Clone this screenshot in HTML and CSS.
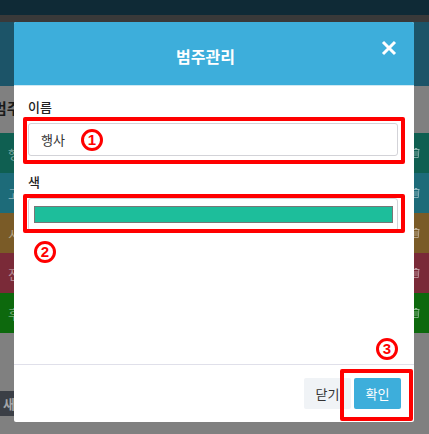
FILE: index.html
```html
<!DOCTYPE html>
<html lang="ko">
<head>
<meta charset="utf-8">
<title>범주관리</title>
<link rel="stylesheet" href="styles.css">
</head>
<body>
<div class="page">
  <div class="topbar"></div>
  <div class="strip"></div>
  <div class="hero"></div>
  <div class="section-title">범주</div>
  <ul class="cat-list">
    <li class="cat cat-green"><span class="cat-name">행사</span><svg class="trash" viewBox="0 0 8 10" width="8" height="10"><path d="M0.5 1.5h7M3 1.5v-1h2v1M1.2 1.5l0.5 8h4.6l0.5-8M3 3v5M5 3v5" fill="none" stroke="currentColor" stroke-width="1"/></svg></li>
    <li class="cat cat-teal"><span class="cat-name">고객</span><svg class="trash" viewBox="0 0 8 10" width="8" height="10"><path d="M0.5 1.5h7M3 1.5v-1h2v1M1.2 1.5l0.5 8h4.6l0.5-8M3 3v5M5 3v5" fill="none" stroke="currentColor" stroke-width="1"/></svg></li>
    <li class="cat cat-brown"><span class="cat-name">시장</span><svg class="trash" viewBox="0 0 8 10" width="8" height="10"><path d="M0.5 1.5h7M3 1.5v-1h2v1M1.2 1.5l0.5 8h4.6l0.5-8M3 3v5M5 3v5" fill="none" stroke="currentColor" stroke-width="1"/></svg></li>
    <li class="cat cat-red"><span class="cat-name">전화</span><svg class="trash" viewBox="0 0 8 10" width="8" height="10"><path d="M0.5 1.5h7M3 1.5v-1h2v1M1.2 1.5l0.5 8h4.6l0.5-8M3 3v5M5 3v5" fill="none" stroke="currentColor" stroke-width="1"/></svg></li>
    <li class="cat cat-lime"><span class="cat-name">후속</span><svg class="trash" viewBox="0 0 8 10" width="8" height="10"><path d="M0.5 1.5h7M3 1.5v-1h2v1M1.2 1.5l0.5 8h4.6l0.5-8M3 3v5M5 3v5" fill="none" stroke="currentColor" stroke-width="1"/></svg></li>
  </ul>
  <div class="list-foot">
    <button class="new-btn">새 범주</button>
  </div>
</div>

<div class="modal">
  <div class="modal-header">
    <h2 class="modal-title">범주관리</h2>
    <button class="close-btn" aria-label="닫기">
      <svg viewBox="0 0 16 16" width="16" height="16"><path d="M2 2L14 14M14 2L2 14" stroke="#fff" stroke-width="3" fill="none"/></svg>
    </button>
  </div>
  <div class="modal-body">
    <label class="field-label">이름</label>
    <div class="text-input">행사</div>
    <label class="field-label field-label-2">색</label>
    <div class="color-input"><div class="swatch"></div></div>
  </div>
  <div class="modal-footer">
    <button class="btn btn-close">닫기</button>
    <button class="btn btn-ok">확인</button>
  </div>

  <div class="mark mark-1"></div>
  <div class="mark mark-2"></div>
  <div class="mark mark-3"></div>
  <span class="num num-1">1</span>
  <span class="num num-2">2</span>
  <span class="num num-3">3</span>
</div>
</body>
</html>
```

FILE: styles.css
```css
html, body {
  margin: 0;
  padding: 0;
}
body {
  width: 429px;
  height: 434px;
  overflow: hidden;
  background: #808080;
  font-family: "Noto Sans CJK KR", "Noto Sans", sans-serif;
  position: relative;
}
.page {
  display: flex;
  flex-direction: column;
}
.topbar {
  height: 15px;
  background: #0f2a36;
}
.strip {
  height: 7px;
  background: #393939;
}
.hero {
  height: 64px;
  background: #1c5468;
}
.section-title {
  height: 47px;
  background: #808080;
  box-sizing: border-box;
  padding-top: 12px;
  margin-left: -7px;
  font-size: 15px;
  font-weight: 700;
  color: #1a1a1a;
  line-height: 20px;
}
.cat-list {
  list-style: none;
  margin: 0;
  padding: 0;
}
.cat {
  height: 40px;
  display: flex;
  align-items: center;
  justify-content: space-between;
  padding: 0 8px 0 8px;
  font-size: 13px;
  color: rgba(255, 255, 255, 0.45);
}
.trash {
  color: rgba(255, 255, 255, 0.45);
  margin-right: 1px;
}
.cat-green { background: #0f5f51; }
.cat-teal { background: #1d6b79; }
.cat-brown { background: #7a5b27; }
.cat-red { background: #7a2a38; }
.cat-lime { background: #0d690d; }
.list-foot {
  padding-top: 58px;
}
.new-btn {
  display: block;
  height: 25px;
  border: 0;
  margin: 0;
  padding: 0 8px 0 3px;
  background: #3b3f46;
  color: rgba(255, 255, 255, 0.55);
  font-family: inherit;
  font-size: 13px;
  font-weight: 700;
}

.modal {
  position: absolute;
  left: 14px;
  top: 22px;
  width: 400px;
  height: 400px;
  background: #fff;
  border-radius: 2px;
  display: flex;
  flex-direction: column;
}
.modal-header {
  height: 64px;
  box-sizing: border-box;
  background: #3daedb;
  border-bottom: 1px solid #cfe9f3;
  border-radius: 2px 2px 0 0;
  display: flex;
  align-items: flex-start;
  padding: 18px 17px 0 16px;
}
.modal-title {
  flex: 1;
  margin: 0;
  padding-top: 5px;
  text-align: center;
  color: #fff;
  font-size: 16px;
  font-weight: 700;
  line-height: 22px;
}
.close-btn {
  border: 0;
  background: none;
  padding: 0;
  margin: 0;
  width: 16px;
  height: 16px;
  display: block;
}
.close-btn svg { display: block; }
.modal-body {
  flex: 1;
  padding: 11px 16px 0 14px;
  display: flex;
  flex-direction: column;
}
.field-label {
  font-size: 13px;
  font-weight: 500;
  color: #222;
  line-height: 20px;
  margin-bottom: 6px;
}
.field-label-2 {
  margin-top: 16px;
}
.text-input {
  height: 33px;
  box-sizing: border-box;
  border: 1px solid #d3d3d8;
  border-radius: 3px;
  padding: 0 12px;
  font-size: 13px;
  line-height: 31px;
  color: #333;
}
.color-input {
  height: 33px;
  box-sizing: border-box;
  border: 1px solid #d3d3d8;
  border-radius: 3px;
  padding: 7px 4px 0 5px;
}
.swatch {
  height: 17px;
  box-sizing: border-box;
  border: 1px solid #777;
  background: #1dbe9b;
}
.modal-footer {
  height: 58px;
  box-sizing: border-box;
  border-top: 1px solid #e0e0ea;
  display: flex;
  justify-content: flex-end;
  align-items: flex-start;
  gap: 3px;
  padding: 13px 13px 0 0;
}
.btn {
  height: 31px;
  width: 47px;
  border: 0;
  border-radius: 2px;
  font-family: inherit;
  font-size: 13px;
  padding: 0;
}
.btn-close {
  background: #f0f3f6;
  color: #333;
}
.btn-ok {
  background: #3daedb;
  color: #fff;
}

.mark {
  position: absolute;
  border: 4px solid #ff0000;
  border-radius: 2px;
  box-sizing: border-box;
}
.mark-1 { left: 9px; top: 95px; width: 382px; height: 47px; }
.mark-2 { left: 9px; top: 172px; width: 382px; height: 39px; }
.mark-3 { left: 326px; top: 347px; width: 73px; height: 52px; }
.num {
  position: absolute;
  width: 22px;
  height: 22px;
  box-sizing: border-box;
  border: 3px solid #ff0000;
  border-radius: 50%;
  color: #ff0000;
  font-family: "Liberation Sans", sans-serif;
  font-weight: 700;
  font-size: 15px;
  line-height: 16px;
  text-align: center;
}
.num-1 { left: 67px; top: 107px; }
.num-2 { left: 20px; top: 219px; }
.num-3 { left: 362px; top: 316px; }
```
